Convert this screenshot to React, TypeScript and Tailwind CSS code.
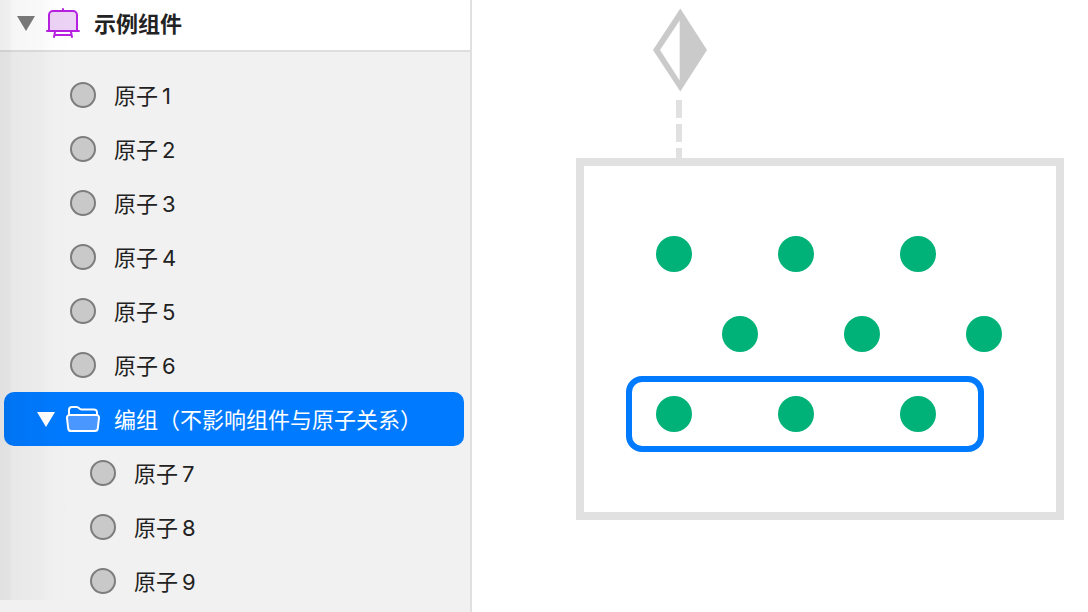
import { useState } from "react";

const atoms = [1, 2, 3, 4, 5, 6];
const groupedAtoms = [7, 8, 9];

function EaselIcon() {
  return (
    <svg className="h-8 w-9 shrink-0" viewBox="45 7 36 32" fill="none" stroke="#b620e0" strokeWidth="2" strokeLinecap="round" aria-hidden="true">
      <path d="M49 31V15a4 4 0 0 1 4-4h20a4 4 0 0 1 4 4v16Z" fill="#ecd2f5" />
      <path d="M63 9v2M47 31h32M55 32l-1 5M71 32l1 5M54.500 35h17" />
    </svg>
  );
}

function FolderIcon() {
  return (
    <svg className="h-7 w-9 shrink-0" viewBox="65 405 36 28" fill="none" stroke="#ffffff" strokeWidth="2" strokeLinejoin="round" aria-hidden="true">
      <path d="M69 415v-5a3 3 0 0 1 3-3h4.500q1.500 0 2.500 1.200t2.500 1.200H94a3 3 0 0 1 3 3v3" />
      <path d="M69.500 415h27a2.500 2.500 0 0 1 2.500 2.800l-1.200 10.500a3 3 0 0 1-3 2.700H71.200a3 3 0 0 1-3-2.700L67 417.800A2.500 2.500 0 0 1 69.500 415Z" fill="#4a98ff" />
    </svg>
  );
}

function Disclosure({ open, label, tone, onToggle }: { open: boolean; label: string; tone: string; onToggle: () => void }) {
  return (
    <button type="button" aria-expanded={open} aria-label={label} onClick={onToggle} className={`shrink-0 ${tone}`}>
      <svg className={open ? "h-4 w-5" : "h-4 w-5 -rotate-90"} viewBox="0 0 20 16" fill="currentColor" aria-hidden="true">
        <path d="M1 1h18l-9 15Z" />
      </svg>
    </button>
  );
}

function AtomRow({ index, nested }: { index: number; nested?: boolean }) {
  return (
    <li className={`flex h-[54px] items-center gap-[18px] ${nested ? "pl-[90px]" : "pl-[70px]"}`}>
      <span className="size-[26px] shrink-0 rounded-full border-2 border-[#7d7d7d] bg-[#c9c9c9]" />
      <span className="flex gap-1 pt-0.5">
        <span>原子</span>
        <span>{index}</span>
      </span>
    </li>
  );
}

function Dots() {
  return (
    <div className="flex gap-[86px]">
      <span className="size-9 shrink-0 rounded-full bg-[#00b277]" />
      <span className="size-9 shrink-0 rounded-full bg-[#00b277]" />
      <span className="size-9 shrink-0 rounded-full bg-[#00b277]" />
    </div>
  );
}

export default function App() {
  const [open, setOpen] = useState(true);
  const [groupOpen, setGroupOpen] = useState(true);

  return (
    <div className="flex min-h-screen overflow-hidden bg-white font-['Inter','Noto_Sans_CJK_SC',sans-serif] text-[22px] leading-8 text-[#222222]">
      <aside className="relative w-[472px] shrink-0 border-r-2 border-[#e0e0e0] bg-[#f1f1f1]">
        <header className="flex h-[52px] items-center border-b-2 border-[#dedede] bg-white pb-1 pl-4">
          <Disclosure open={open} label="示例组件" tone="text-[#7b7b7b]" onToggle={() => setOpen(!open)} />
          <span className="ml-[9px] flex">
            <EaselIcon />
          </span>
          <h1 className="ml-[13px] pt-0.5 font-semibold">示例组件</h1>
        </header>
        {open && (
          <ul className="pt-4">
            {atoms.map((n) => (
              <AtomRow key={n} index={n} />
            ))}
            <li>
              <div className="mr-1.5 ml-1 flex h-[54px] items-center rounded-[10px] bg-[#007aff] pl-8 text-white">
                <Disclosure open={groupOpen} label="编组" tone="text-white" onToggle={() => setGroupOpen(!groupOpen)} />
                <span className="ml-[9px] flex">
                  <FolderIcon />
                </span>
                <span className="ml-[13px] pt-0.5 whitespace-nowrap">编组（不影响组件与原子关系）</span>
              </div>
              {groupOpen && (
                <ul>
                  {groupedAtoms.map((n) => (
                    <AtomRow key={n} index={n} nested />
                  ))}
                </ul>
              )}
            </li>
          </ul>
        )}
        <div className="pointer-events-none absolute top-0 left-0 h-[600px] w-20 bg-[linear-gradient(90deg,rgba(0,0,0,0.07)_0px,rgba(0,0,0,0.06)_10px,rgba(0,0,0,0.035)_12px,rgba(0,0,0,0.025)_42px,rgba(0,0,0,0.008)_50px,transparent_72px)]" />
      </aside>

      <main className="min-w-0 flex-1 pt-2 pr-6 pl-[104px]">
        <div className="ml-[75px] flex w-14 flex-col items-center">
          <svg className="h-[84px] w-14" viewBox="651 8 56 84" aria-hidden="true">
            <path d="M680.300 8.500 707 50 680.300 91.500 653 50Z" fill="#cacaca" />
            <path d="M679.700 20.500V80.500L660 50Z" fill="#ffffff" />
          </svg>
          <div className="flex flex-col gap-1.5 pt-2">
            <span className="h-[18px] w-1.5 bg-[#e1e1e1]" />
            <span className="h-[18px] w-1.5 bg-[#e1e1e1]" />
            <span className="h-2.5 w-1.5 bg-[#e1e1e1]" />
          </div>
        </div>
        <section className="border-8 border-[#e1e1e1] px-[42px] pt-[70px] pb-[60px]">
          <div className="pl-[30px]">
            <Dots />
          </div>
          <div className="mt-11 pl-24">
            <Dots />
          </div>
          <div className="mt-6 w-fit rounded-2xl border-6 border-[#007aff] py-3.5 pr-[42px] pl-6">
            <Dots />
          </div>
        </section>
      </main>
    </div>
  );
}
